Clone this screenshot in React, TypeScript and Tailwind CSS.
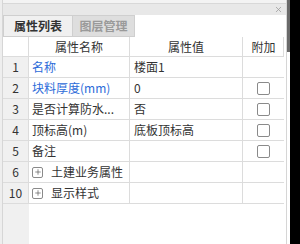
import { Plus, X } from "lucide-react";

type Row = {
  no: string;
  name: string;
  value?: string;
  blue?: boolean;
  check?: boolean;
  group?: boolean;
};

const rows: Row[] = [
  { no: "1", name: "名称", value: "楼面1", blue: true },
  { no: "2", name: "块料厚度(mm)", value: "0", blue: true, check: true },
  { no: "3", name: "是否计算防水...", value: "否", check: true },
  { no: "4", name: "顶标高(m)", value: "底板顶标高", check: true },
  { no: "5", name: "备注", value: "", check: true },
  { no: "6", name: "土建业务属性", group: true },
  { no: "10", name: "显示样式", group: true },
];

const cols = "grid grid-cols-[26px_101px_113px_41px]";

const App = () => {
  return (
    <div className="flex w-[300px] h-[244px] bg-black overflow-hidden font-['Noto_Sans_CJK_SC',sans-serif] text-[12px] text-[#333]">
      <div className="flex w-[290px] h-full bg-white">
        <div className="w-[2px] bg-[#eeeeee]" />
        <div className="flex flex-col w-[285px] border-x border-[#d6d6d6]">
          <div className="h-[3px] bg-[#f3f3f3]" />
          <div className="flex items-center justify-end h-[12px] bg-[#e8e8e8] border-t border-[#d8d8d8] pr-[3px]">
            <X className="w-[9px] h-[9px] text-[#9a9a9a]" strokeWidth={2} />
          </div>
          <div className="flex h-[22px] bg-white">
            <div className="flex items-center justify-center w-[70px] bg-[#f0f0f0] border border-[#cfcfcf] font-bold text-[12px] text-[#333]">
              属性列表
            </div>
            <div className="flex items-center justify-center w-[62px] bg-[#dedede] border border-l-0 border-[#cfcfcf] font-bold text-[12px] text-[#9a9a9a]">
              图层管理
            </div>
          </div>
          <div className="relative flex-1 flex flex-col">
            <div className="absolute left-0 top-0 bottom-0 w-[26px] bg-[#f0f0f0]" />
            <div className="relative w-[281px] border-r border-[#dcdcdc]">
              <div className={`${cols} h-[20px] bg-white border-b border-[#dcdcdc]`}>
                <div className="border-r border-[#dcdcdc] bg-white" />
                <div className="flex items-center justify-center border-r border-[#dcdcdc]">属性名称</div>
                <div className="flex items-center justify-center border-r border-[#dcdcdc]">属性值</div>
                <div className="flex items-center justify-center">附加</div>
              </div>
              {rows.map((r) => (
                <div key={r.no} className={`${cols} h-[21px] border-b border-[#dcdcdc]`}>
                  <div className="flex items-center justify-center bg-[#f0f0f0] border-r border-[#dcdcdc]">
                    {r.no}
                  </div>
                  <div
                    className={`flex items-center pl-[3px] border-r border-[#dcdcdc] whitespace-nowrap bg-white ${
                      r.blue ? "text-[#2c6bd9]" : "text-[#333]"
                    }`}
                  >
                    {r.group && (
                      <span className="flex items-center justify-center w-[11px] h-[11px] mr-[8px] border border-[#8a8a8a] rounded-[2px]">
                        <Plus className="w-[8px] h-[8px] text-[#555]" strokeWidth={2} />
                      </span>
                    )}
                    {r.name}
                  </div>
                  <div className="flex items-center pl-[4px] border-r border-[#dcdcdc] bg-white">
                    {r.value}
                  </div>
                  <div className="flex items-center justify-center bg-white">
                    {r.check && (
                      <span className="w-[13px] h-[13px] border border-[#8a8a8a] rounded-[2px] bg-white" />
                    )}
                  </div>
                </div>
              ))}
            </div>
          </div>
        </div>
        <div className="w-[3px] flex flex-col">
          <div className="h-[52px] w-[3px] bg-[#6a6a6a]" />
        </div>
      </div>
    </div>
  );
};

export default App;
